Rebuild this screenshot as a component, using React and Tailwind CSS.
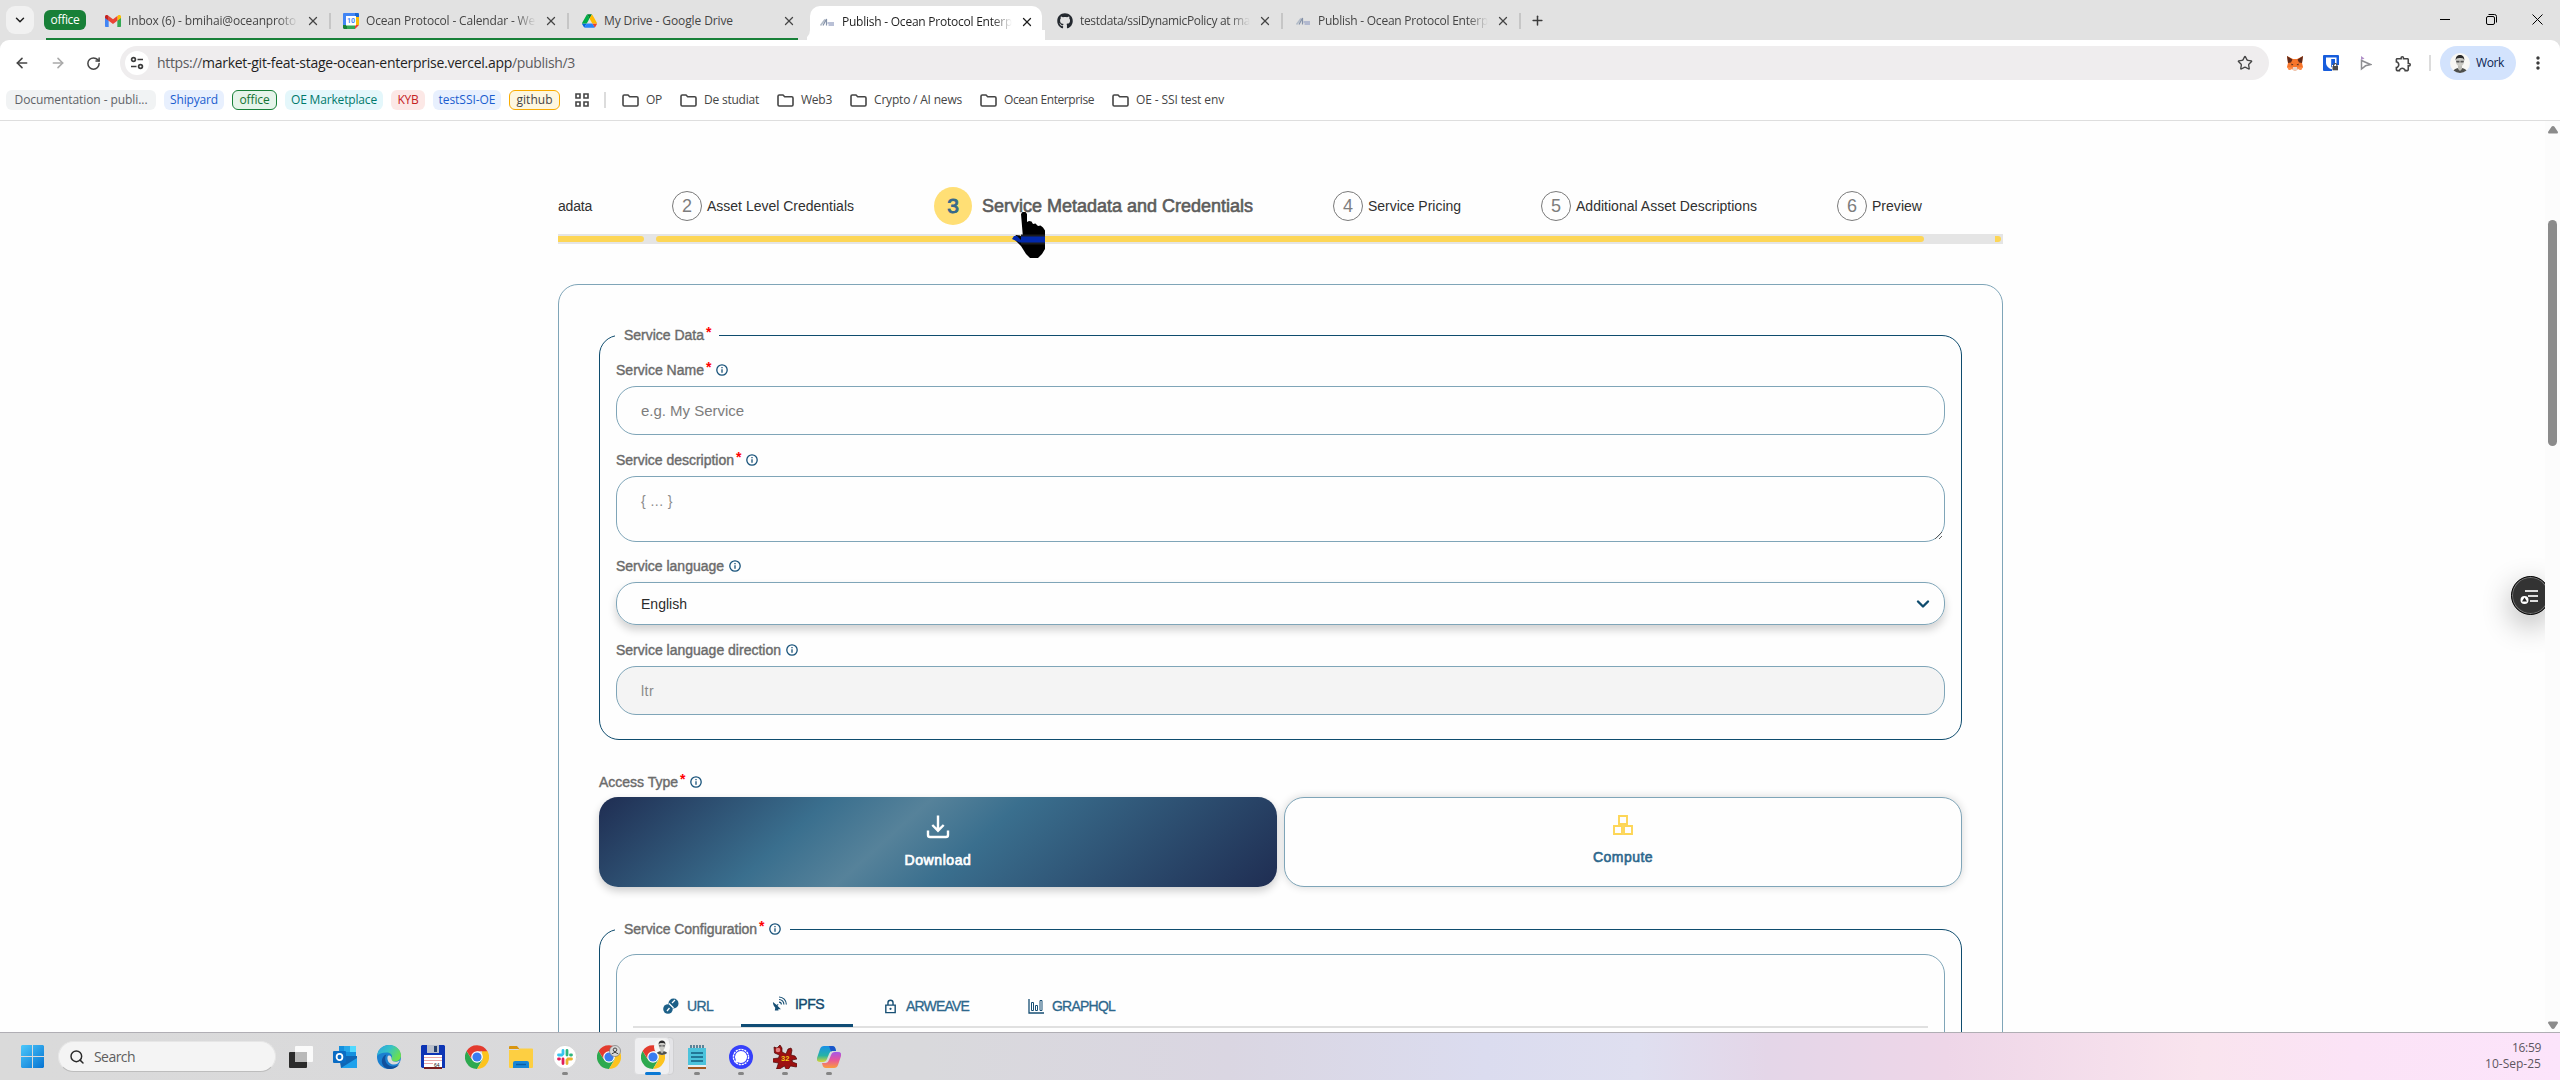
import React, { useLayoutEffect, useRef } from 'react';
import { X, Plus, ArrowLeft, ArrowRight, RotateCw, Star, Search, ChevronDown } from 'lucide-react';
import { FaGithub } from 'react-icons/fa';
import { MdOutlineExtension, MdMoreVert } from 'react-icons/md';

/* A single line of text tracked so that it spans exactly w pixels. */
function Fit({ w, className = '', children }) {
  const ref = useRef(null);
  useLayoutEffect(() => {
    const el = ref.current;
    el.style.letterSpacing = '0px';
    const n = el.textContent.length;
    const natural = el.getBoundingClientRect().width;
    el.style.letterSpacing = `${(w - natural) / n}px`;
  }, [w, children]);
  return (
    <span ref={ref} className={`inline-block shrink-0 whitespace-nowrap ${className}`}>
      {children}
    </span>
  );
}

/* ---------- browser icons ---------- */

const Gmail = () => (
  <svg viewBox="0 0 24 18" className="h-3 w-4">
    <path d="M0 2v14.400c0 .9.700 1.600 1.600 1.600H5.500V8.500z" fill="#4285f4" />
    <path d="M18.500 18h3.900c.9 0 1.600-.7 1.600-1.600V2l-5.500 6.500z" fill="#34a853" />
    <path d="M18.500 1.500v7L24 4.400V2.400c0-2-2.300-3.200-4-2z" fill="#fbbc04" />
    <path d="M5.500 8.500v-7L12 6.400l6.500-4.900v7L12 13.400z" fill="#ea4335" />
    <path d="M0 2.400v2l5.500 4.100v-7L4 .4C2.300-.8 0 .4 0 2.400z" fill="#c5221f" />
  </svg>
);

const Calendar = () => (
  <svg viewBox="0 0 16 16" className="size-4">
    <path d="M1.200 0H12v4H4v8H0V1.200C0 .5.500 0 1.200 0z" fill="#4285f4" />
    <path d="M12 0h2.800c.7 0 1.200.500 1.200 1.200V4h-4z" fill="#1967d2" />
    <path d="M12 4h4v8h-4z" fill="#fbbc04" />
    <path d="M4 12h8v4H4z" fill="#34a853" />
    <path d="M0 12h4v4H1.200C.5 16 0 15.500 0 14.800z" fill="#188038" />
    <path d="M12 12h4l-4 4z" fill="#ea4335" />
    <path d="M3 3h10v9.500H3z" fill="#fff" />
    <text x="8" y="10.300" textAnchor="middle" fontSize="7" fontWeight="700" fontFamily="Roboto, sans-serif" fill="#4285f4">10</text>
  </svg>
);

const Drive = () => (
  <svg viewBox="0 0 87 78" className="h-[14px] w-[15px]">
    <path d="M6.600 66.850l3.850 6.650c.8 1.400 1.950 2.500 3.300 3.300L27.500 53H0c0 1.550.4 3.100 1.200 4.500z" fill="#0066da" />
    <path d="M43.650 25L29.900 1.200c-1.350.8-2.500 1.900-3.300 3.300L1.200 48.500C.4 49.900 0 51.450 0 53h27.500z" fill="#00ac47" />
    <path d="M73.550 76.800c1.350-.8 2.500-1.900 3.300-3.300l9.250-16c.8-1.400 1.200-2.950 1.200-4.500H59.800l5.850 11.500z" fill="#ea4335" />
    <path d="M43.650 25L57.400 1.200C56.050.4 54.500 0 52.900 0H34.400c-1.600 0-3.150.45-4.500 1.200z" fill="#00832d" />
    <path d="M59.800 53H27.500L13.750 76.800c1.350.8 2.900 1.200 4.500 1.200h50.800c1.600 0 3.150-.45 4.500-1.200z" fill="#2684fc" />
    <path d="M73.400 26.500L60.700 4.500c-.8-1.400-1.950-2.500-3.300-3.300L43.650 25 59.800 53h27.450c0-1.550-.4-3.100-1.200-4.500z" fill="#ffba00" />
  </svg>
);

const Ocean = () => (
  <svg viewBox="0 0 16 16" className="size-4">
    <path d="M1.500 11.500L6 5.500" stroke="#b3bcc8" strokeWidth="1.500" />
    <path d="M4 11.500L7.500 5v6.500" fill="none" stroke="#8592a8" strokeWidth="1.200" />
    <path d="M8.500 9H15M9.500 11H15" stroke="#a3acc9" strokeWidth="1.400" />
  </svg>
);

const TuneIcon = () => (
  <svg viewBox="0 0 16 16" className="size-4" fill="none" stroke="#3c3c3c" strokeWidth="1.700">
    <circle cx="4.500" cy="4.500" r="1.900" />
    <path d="M8.500 4.500H14M2 11.500h5.500" />
    <circle cx="11.500" cy="11.500" r="1.900" />
  </svg>
);

const Fox = () => (
  <svg viewBox="0 0 16 15" className="h-[15px] w-4">
    <path d="M0 0l6 3h4l6-3-1 7 1 4-2 3-3-1-2 1.500H7L5 13l-3 1-2-3 1-4z" fill="#f6752b" />
    <path d="M0 0l5.500 3.500L4 6.500 1 7zM16 0l-5.500 3.500L12 6.500l3 .5z" fill="#5e2a1c" />
    <path d="M6 11h4l.5 2-1 1.500h-3L5.500 13z" fill="#e8d2c6" />
    <path d="M4.500 7.500l2 1.500-2 .3zM11.500 7.500l-2 1.500 2 .3z" fill="#33231f" />
    <path d="M0 11l5 .5L5 13l-3 1zM16 11l-5 .5.1 1.500 2.900 1z" fill="#ff8e4a" />
  </svg>
);

const Bitwarden = () => (
  <svg viewBox="0 0 16 16" className="size-4">
    <rect width="16" height="16" rx="1" fill="#175ddc" />
    <path d="M3 2.500h10.500V8c0 3-2.500 5-5.200 6.300C5.500 13 3 11 3 8z" fill="#fff" />
    <path d="M8.200 4H12v4c0 1.800-1.500 3.200-3.800 4.500z" fill="#175ddc" />
    <rect x="9" y="10" width="7" height="6" fill="#fff" />
    <rect x="9.500" y="11" width="5.500" height="4.300" fill="#4b4b4b" />
    <path d="M10.600 11V9.800a1.700 1.700 0 013.300 0V11" fill="none" stroke="#4b4b4b" strokeWidth="1.200" />
  </svg>
);

const Pointer = () => (
  <svg viewBox="0 0 12 16" className="h-4 w-3" fill="none" strokeWidth="1.500">
    <path d="M1.500 14V5.500l9 4-5 1.300z" stroke="#8e8e92" />
    <path d="M1 1v4l3.500-1.500z" fill="#b08fc7" stroke="none" />
  </svg>
);

const Face = ({ className }) => (
  <svg viewBox="0 0 20 20" className={className}>
    <circle cx="10" cy="10" r="10" fill="#f7f7f5" />
    <path d="M3.500 17.500C5 15.500 7.500 15 10 15s5 .5 6.500 2.500A10 10 0 013.500 17.500z" fill="#4d4f4d" />
    <path d="M8 12h4v4l-2 2-2-2z" fill="#bdbdb8" />
    <ellipse cx="10" cy="8.500" rx="4" ry="5" fill="#c9c9c4" />
    <path d="M5.700 7.500C5.500 3.500 7.500 2 10 2s4.500 1.500 4.300 5.500c-.8-2-1-2.600-4.300-2.600s-3.500.6-4.300 2.600z" fill="#2c2c2c" />
    <path d="M6 7.800h3.500v1.700H6.500zM10.500 7.800H14l-.5 1.700h-3z" fill="#555" />
  </svg>
);

/* ---------- browser chrome ---------- */

const tabs = [
  { icon: <Gmail />, title: 'Inbox (6) - bmihai@oceanproto', w: 168 },
  { icon: <Calendar />, title: 'Ocean Protocol - Calendar - We', w: 169 },
  { icon: <Drive />, title: 'My Drive - Google Drive', w: 129 },
  { icon: <Ocean />, title: 'Publish - Ocean Protocol Enterp', w: 170, active: true },
  { icon: <FaGithub className="size-4 text-[#24292f]" />, title: 'testdata/ssiDynamicPolicy at ma', w: 170 },
  { icon: <Ocean />, title: 'Publish - Ocean Protocol Enterp', w: 170 },
];

function Tab({ t, index }) {
  const fade = index !== 2 ? '[mask-image:linear-gradient(90deg,#000_88%,transparent)]' : '';
  const body = (
    <>
      <span className="flex w-4 shrink-0 justify-center">{t.icon}</span>
      <span className={`ml-[7px] w-[170px] overflow-hidden ${fade}`}>
        <Fit w={t.w}>{t.title}</Fit>
      </span>
      <X className="ml-2 size-[14px] shrink-0" strokeWidth={2.200} />
    </>
  );
  if (t.active) {
    return (
      <div className="flex w-[238px] shrink-0 items-end text-[#1f1f1f]">
        <span className="h-2.5 w-[3px] bg-white" />
        <div className="relative flex h-[34px] w-[232px] items-center rounded-t-[10px] bg-white pb-[3px] pl-[9px]">
          <span className="absolute bottom-0 -left-[10px] size-[10px] rounded-br-[10px] bg-[#e2e2e2]" />
          {body}
        </div>
        <span className="h-2.5 w-[3px] bg-white" />
      </div>
    );
  }
  const sep = index !== 2 && index !== 3;
  return (
    <div className="flex w-[238px] shrink-0 items-center pt-[2px] pl-3 text-[#454545]">
      {body}
      {sep && <span className="ml-auto h-4 w-[2px] bg-[#c6c6c6]" />}
    </div>
  );
}

function TabStrip() {
  return (
    <div className="relative flex h-10 bg-[#e2e2e2]">
      <div className="mt-1.5 ml-1.5 flex size-7 items-center justify-center rounded-[9px] bg-[#f1f1f1]">
        <ChevronDown className="size-3.5 text-[#1f1f1f]" strokeWidth={2.500} />
      </div>
      <div className="mt-2.5 ml-2.5 flex h-5 w-[42px] items-center justify-center rounded-md bg-[#188038] text-white">
        <Fit w={29}>office</Fit>
      </div>
      <div className="ml-[7px] flex">
        {tabs.map((t, i) => (
          <Tab key={i} t={t} index={i} />
        ))}
      </div>
      <Plus className="mt-[13px] ml-[9px] size-[15px] text-[#3c3c3c]" strokeWidth={2.400} />
      <div className="mt-[14px] mr-[17px] ml-auto flex gap-[35px] text-black">
        <svg viewBox="0 0 11 11" className="size-[11px]"><path d="M0 5.500h10" stroke="currentColor" /></svg>
        <svg viewBox="0 0 11 11" className="size-[11px]" fill="none" stroke="currentColor">
          <rect x=".5" y="2.500" width="8" height="8" rx="1.500" />
          <path d="M2.500.5h6a2 2 0 012 2v6" />
        </svg>
        <svg viewBox="0 0 11 11" className="size-[11px]"><path d="M.5.5l10 10M10.500.5l-10 10" stroke="currentColor" /></svg>
      </div>
      <span className="absolute bottom-0 left-[46px] h-[2px] w-[752px] bg-[#188038]" />
    </div>
  );
}

function Toolbar() {
  return (
    <div className="bg-[#e2e2e2]">
      <div className="flex h-[46px] items-center rounded-t-[9px] bg-white pl-[14px]">
        <ArrowLeft className="size-4 text-[#454545]" strokeWidth={2.400} />
        <ArrowRight className="ml-5 size-4 text-[#a9a9a9]" strokeWidth={2.400} />
        <RotateCw className="ml-5 size-[15px] text-[#454545]" strokeWidth={2.400} />
        <div className="ml-[19px] flex h-[34px] w-[2149px] items-center rounded-full bg-[#efedee] pl-[5px]">
          <span className="flex size-6 items-center justify-center rounded-full bg-white"><TuneIcon /></span>
          <span className="ml-2 text-sm text-[#5b5b5e]">
            <Fit w={45}>https://</Fit>
            <Fit w={310} className="text-[#1f1f1f]">market-git-feat-stage-ocean-enterprise.vercel.app</Fit>
            <Fit w={63}>/publish/3</Fit>
          </span>
          <Star className="mr-4 ml-auto size-4 text-[#454545]" />
        </div>
        <span className="ml-[18px]"><Fox /></span>
        <span className="ml-5"><Bitwarden /></span>
        <span className="ml-[21px]"><Pointer /></span>
        <MdOutlineExtension className="ml-[22px] size-[19px] text-[#454545]" />
        <span className="ml-[16px] h-4 w-[2px] bg-[#dcdcdc]" />
        <div className="ml-[9px] flex h-[34px] w-[76px] items-center rounded-full bg-[#d3e3fd] pl-2.5 text-[#0b2350]">
          <Face className="size-5" />
          <span className="ml-[6px]"><Fit w={28}>Work</Fit></span>
        </div>
        <MdMoreVert className="ml-[12px] size-5 text-[#3c3c3c]" />
      </div>
    </div>
  );
}

const Folder = ({ name, w }) => (
  <span className="flex items-center gap-[7px]">
    <svg viewBox="0 0 17 13" className="h-[13px] w-[17px]" fill="none" stroke="#454545" strokeWidth="1.600">
      <path d="M1 2.200Q1 1 2.200 1H6l1.700 1.700h7Q16 2.700 16 4v6.800Q16 12 14.800 12H2.200Q1 12 1 10.800z" />
    </svg>
    <Fit w={w}>{name}</Fit>
  </span>
);

function Bookmarks() {
  const chip = 'flex h-5 items-center justify-center rounded-md';
  return (
    <div className="flex h-[35px] items-start gap-2 border-b border-[#dedede] bg-white pt-1 pl-1.5 text-[#454545]">
      <span className={`${chip} w-[150px] bg-[#f1f3f4] text-[#5f6368]`}><Fit w={133}>Documentation - publi...</Fit></span>
      <span className={`${chip} w-[60px] bg-[#e8f0fe] text-[#1a5dcf]`}><Fit w={48}>Shipyard</Fit></span>
      <span className={`${chip} w-[45px] border border-[#188038] bg-[#e6f4ea] text-[#137333]`}><Fit w={30}>office</Fit></span>
      <span className={`${chip} w-[98px] bg-[#e4f7fb] text-[#00796b]`}><Fit w={86}>OE Marketplace</Fit></span>
      <span className={`${chip} w-[34px] bg-[#fce8e6] text-[#c5221f]`}><Fit w={21}>KYB</Fit></span>
      <span className={`${chip} w-[68px] bg-[#e8f0fe] text-[#1a5dcf]`}><Fit w={57}>testSSI-OE</Fit></span>
      <span className={`${chip} w-[51px] border border-[#f9ab00] bg-[#fef7e0] text-[#454545]`}><Fit w={36}>github</Fit></span>
      <svg viewBox="0 0 14 14" className="mt-[3px] ml-[7px] size-[14px]" fill="none" stroke="#454545" strokeWidth="1.600">
        <path d="M1 1h4v4H1zM9 1h4v4H9zM1 9h4v4H1zM9 9h4v4H9z" />
      </svg>
      <span className="mt-0.5 ml-[7px] h-4 w-[2px] bg-[#dcdcdc]" />
      <div className="ml-2 flex h-5 items-center gap-[18px]">
        <Folder name="OP" w={16} />
        <Folder name="De studiat" w={55} />
        <Folder name="Web3" w={31} />
        <Folder name="Crypto / AI news" w={88} />
        <Folder name="Ocean Enterprise" w={90} />
        <Folder name="OE - SSI test env" w={88} />
      </div>
    </div>
  );
}

/* ---------- page ---------- */

const Step = ({ n, w, children, className }) => (
  <div className={`flex shrink-0 items-center gap-[5px] ${className}`}>
    <span className="flex size-[30px] items-center justify-center rounded-full border border-[#7a7a7a] text-lg text-[#7d7d7d]">{n}</span>
    <Fit w={w} className="text-sm text-[#303030]">{children}</Fit>
  </div>
);

const HandCursor = () => (
  <svg viewBox="0 0 34 48" className="absolute top-[90px] left-[1011px] h-12 w-[34px]">
    <path d="M10 3l1.500-2h3L16 3v8l2-1 2.500.5L22 13l2.500-.5L27 15l2.500-.5 2.500 2 2 3V38l-3 5-4 4h-8l-4-4-5-8-5-5-2-3 2-3 4 .5 3 2.500z" fill="#000" />
    <path d="M10 23.500h24v10H10z" fill="#1c1c1c" />
    <path d="M10 25.500h24v6H8.500L1 28l2-3h3l4 4z" fill="#0229ab" />
  </svg>
);

function Steps() {
  return (
    <>
      <div className="mt-[65px] flex h-10 items-center overflow-hidden">
        <Fit w={34} className="text-sm text-[#303030]">adata</Fit>
        <Step n="2" w={147} className="ml-20">Asset Level Credentials</Step>
        <div className="ml-20 flex shrink-0 items-center gap-[10px]">
          <span className="flex size-[38px] items-center justify-center rounded-full bg-[#ffdf75] text-[21px] text-[#35698a] [-webkit-text-stroke:0.900px_#35698a]">3</span>
          <Fit w={271} className="text-[18px] text-[#5c5c5c] [-webkit-text-stroke:0.600px_#5c5c5c]">Service Metadata and Credentials</Fit>
        </div>
        <Step n="4" w={93} className="ml-20">Service Pricing</Step>
        <Step n="5" w={181} className="ml-20">Additional Asset Descriptions</Step>
        <Step n="6" w={50} className="ml-20">Preview</Step>
        <Step n="7" w={80} className="ml-[81px]">Submission</Step>
      </div>
      <div className="mt-2 flex h-2.5 items-center overflow-hidden bg-[#e5e5e5]">
        <span className="h-[6px] w-[86px] shrink-0 rounded-r-[3px] bg-[#fdd656]" />
        <span className="ml-3 h-[6px] w-[1268px] shrink-0 rounded-[3px] bg-[#fdd656]" />
        <span className="ml-[71px] h-[6px] w-[6px] shrink-0 rounded-r-full bg-[#fdd656]" />
      </div>
    </>
  );
}

const Info = () => (
  <svg viewBox="0 0 12 12" className="size-3" fill="none" stroke="#17527a">
    <circle cx="6" cy="6" r="5.200" strokeWidth="1.300" />
    <path d="M6 5.300v3.500M6 3.100v1.200" strokeWidth="1.300" />
  </svg>
);

const Label = ({ w, required, info, children }) => (
  <span className="flex h-5 items-center text-sm text-[#6b6b6b]">
    <Fit w={w} className="[-webkit-text-stroke:0.400px_#6b6b6b]">{children}</Fit>
    {required && <span className="-mt-1.5 ml-[2px] w-[5px] font-bold text-[#f00]">*</span>}
    {info && <span className="ml-[5px]"><Info /></span>}
  </span>
);

const UrlIcon = () => (
  <svg viewBox="0 0 16 16" className="size-4">
    <circle cx="10.500" cy="5.500" r="5" fill="#1d6088" />
    <circle cx="5" cy="11" r="4.800" fill="#1d6088" />
    <path d="M6 5.500l4.500 4.500M12 2l-3 3M4 13l2.500-3" stroke="#fff" strokeWidth="1.300" />
  </svg>
);

const DishIcon = () => (
  <svg viewBox="0 0 16 16" className="size-[15px]" fill="none" stroke="#174f74" strokeWidth="1.200">
    <path d="M1 6.500C1 9 2 11 3.500 12.500L3 15.500h4l-.5-1.500c1 .3 2 .3 3 0L5.800 10.500 7 9.300l-.8-.8L5 9.700z" fill="#174f74" stroke="none" />
    <path d="M7.500 6.500a2.500 2.500 0 012.500 2.500M7.500 3.700A5.300 5.300 0 0112.700 9M7.500 1A8 8 0 0115.300 9" />
  </svg>
);

const LockIcon = () => (
  <svg viewBox="0 0 13 16" className="h-[15px] w-[13px]" fill="none" stroke="#174f74" strokeWidth="1.500">
    <path d="M1.500 6.500h10v8h-10zM3.800 6.500V4a2.700 2.700 0 015.400 0v2.500" />
    <circle cx="6.500" cy="10.500" r="1.200" fill="#174f74" stroke="none" />
  </svg>
);

const GraphIcon = () => (
  <svg viewBox="0 0 16 15" className="h-[15px] w-4" fill="none" stroke="#174f74">
    <path d="M1 0v14h15" strokeWidth="1.300" />
    <path d="M3.500 3.500h2v8h-2zM7.500 6.500h2v5h-2zM12 1.500h2v10h-2z" />
  </svg>
);

function ServiceTabs() {
  const text = 'text-sm text-[#2d678c] [-webkit-text-stroke:0.300px_#2d678c]';
  return (
    <div className="mx-4 flex h-[73px] items-end border-b-2 border-[#e0e0e0]">
      <div className="ml-[30px] flex h-[40px] w-[78px] items-center gap-2"><UrlIcon /><Fit w={26} className={text}>URL</Fit></div>
      <div className="-mb-[1px] flex h-[44px] w-28 items-center gap-2 border-b-[3px] border-[#0f4c75] pl-[31px]">
        <DishIcon /><Fit w={29} className="text-sm text-[#124a6e] [-webkit-text-stroke:0.400px_#124a6e]">IPFS</Fit>
      </div>
      <div className="ml-[31px] flex h-[40px] w-[144px] items-center gap-[9px]"><LockIcon /><Fit w={63} className={text}>ARWEAVE</Fit></div>
      <div className="flex h-[40px] items-center gap-2"><GraphIcon /><Fit w={63} className={text}>GRAPHQL</Fit></div>
    </div>
  );
}

function Page() {
  const box = 'rounded-[20px] border border-[#7fa5b8]';
  return (
    <div className="relative flex h-[911px] overflow-hidden bg-[#fefefe] font-['Liberation_Sans',Arial,sans-serif]">
      <div className="ml-[558px] w-[1445px]">
        <Steps />
        <div className="mt-10 h-[800px] rounded-t-[20px] border border-[#7fa5b8] px-10 pt-[50px]">
          <section className="h-[405px] rounded-[20px] border border-[#0f4c6e] px-4">
            <div className="-mt-[11px] -ml-px flex w-[104px] bg-[#fefefe] pl-[9px]">
              <Label w={80} required>Service Data</Label>
            </div>
            <div className="mt-[15px]"><Label w={88} required info>Service Name</Label></div>
            <div className={`${box} mt-[6px] flex h-[49px] items-center pl-6 text-[15px] text-[#7d7d7d]`}><Fit w={103}>e.g. My Service</Fit></div>
            <div className="mt-[15px]"><Label w={118} required info>Service description</Label></div>
            <div className={`${box} relative mt-[6px] flex h-[66px] pt-[14px] pl-6 text-sm text-[#8c8c8c]`}>
              <Fit w={32}>{'{ ... }'}</Fit>
              <svg viewBox="0 0 9 9" className="absolute right-[1px] bottom-[1px] size-[9px]" stroke="#505050" strokeWidth=".9"><path d="M1 8l7-7M5 8l3-3" /></svg>
            </div>
            <div className="mt-[14px]"><Label w={108} info>Service language</Label></div>
            <div className={`${box} mt-[6px] flex h-[43px] items-center pr-[13px] pl-6 text-sm text-[#2b2b2b] shadow-[0_5px_8px_rgba(0,0,0,0.18)]`}>
              <Fit w={46}>English</Fit>
              <svg viewBox="0 0 16 16" className="ml-auto size-4" fill="none" stroke="#0f4c6e" strokeWidth="2.400" strokeLinecap="round" strokeLinejoin="round"><path d="M3 5.500l5 5 5-5" /></svg>
            </div>
            <div className="mt-[15px]"><Label w={165} info>Service language direction</Label></div>
            <div className={`${box} mt-[6px] flex h-[49px] items-center bg-[#f4f4f4] pl-6 text-sm text-[#8a8a8a]`}><Fit w={13}>ltr</Fit></div>
          </section>

          <div className="mt-8"><Label w={79} required info>Access Type</Label></div>
          <div className="mt-[5px] flex gap-[7px]">
            <div className="flex h-[90px] w-[678px] flex-col items-center rounded-[19px] bg-[linear-gradient(138deg,#1f2d52_0%,#3a6f8e_30%,#56829a_43%,#3a6f8e_55%,#1f2d52_100%)] pt-[18px] text-white shadow-[0_4px_8px_rgba(0,0,0,0.2)]">
              <svg viewBox="0 0 24 24" className="size-6" fill="none" stroke="currentColor" strokeWidth="2.400">
                <path d="M12 .5V15M6.300 10l5.700 5.700L17.700 10M2 15.500V20q0 2 2 2h16q2 0 2-2v-4.500" />
              </svg>
              <Fit w={67} className="mt-[11px] text-sm [-webkit-text-stroke:0.700px_#fff]">Download</Fit>
            </div>
            <div className={`${box} flex h-[90px] w-[678px] flex-col items-center bg-[#fefefe] pt-[17px] shadow-[0_0_8px_rgba(0,0,0,0.16)]`}>
              <svg viewBox="0 0 20 20" className="size-5" fill="none" stroke="#fdd656" strokeWidth="1.900">
                <path d="M6 1h8v8H6zM1 11h8v8H1zM11 11h8v8h-8z" />
              </svg>
              <Fit w={60} className="mt-[12px] text-sm text-[#2d678c] [-webkit-text-stroke:0.600px_#2d678c]">Compute</Fit>
            </div>
          </div>

          <section className="mt-[42px] h-[200px] rounded-t-[20px] border border-[#0f4c6e] px-4">
            <div className="-mt-[11px] -ml-px flex w-[175px] bg-[#fefefe] pl-[9px]">
              <Label w={133} required info>Service Configuration</Label>
            </div>
            <div className="mt-[15px] h-[180px] rounded-t-[20px] border border-[#7fa5b8]">
              <ServiceTabs />
            </div>
          </section>
        </div>
      </div>
      <div className="absolute top-[455px] right-[10px] flex size-[39px] items-center justify-center rounded-full border border-black bg-[#333] pr-1 shadow-[0_10px_30px_rgba(0,0,0,0.3)] ring-1 ring-[#777] ring-inset">
        <svg viewBox="0 0 20 16" className="h-4 w-5" stroke="#ddd" strokeWidth="1.800">
          <path d="M6 3h13M9 8h10M11 13h8" />
          <circle cx="5.500" cy="12" r="4" fill="#fff" stroke="none" />
          <path d="M5.500 9.500l2.500 4H3z" fill="#222" stroke="none" />
        </svg>
      </div>
      <div className="relative ml-auto flex w-[15px] flex-col items-center bg-[#fcfcfc]">
        <svg viewBox="0 0 10 8" className="mt-[5px] h-2 w-[10px]"><path d="M5 0q1 0 1.500.8L10 6q0 1.500-1 1.500H1Q0 7.500 0 6L3.500.8Q4 0 5 0z" fill="#8b8b8b" /></svg>
        <span className="mt-[86px] h-[226px] w-[9px] rounded-full bg-[#8b8b8b]" />
        <svg viewBox="0 0 10 8" className="mt-auto mb-[3px] h-2 w-[10px] rotate-180"><path d="M5 0q1 0 1.500.8L10 6q0 1.500-1 1.500H1Q0 7.500 0 6L3.500.8Q4 0 5 0z" fill="#8b8b8b" /></svg>
      </div>
      <HandCursor />
    </div>
  );
}

/* ---------- taskbar ---------- */

const Chrome = ({ badge }) => (
  <svg viewBox="0 0 24 24" className="size-6">
    <path d="M1.600 6A12 12 0 0012 24l6-10.500L12 12 6.500 14z" fill="#2da94f" />
    <path d="M22.400 6A12 12 0 0112 24l5.500-9L17 6z" fill="#fcc31e" />
    <path d="M1.600 6A12 12 0 0122.400 6.300H12L7 14.500z" fill="#e33b2e" />
    <circle cx="12" cy="12" r="5.800" fill="#fff" />
    <circle cx="12" cy="12" r="4.600" fill="#3a7cf0" />
    {badge && (
      <g>
        <circle cx="18" cy="6" r="5.500" fill="#d8d8d8" stroke="#666" strokeWidth=".6" />
        <circle cx="18" cy="4.800" r="1.800" fill="none" stroke="#444" />
        <path d="M14.800 8.800q3.200-3 6.400 0" fill="none" stroke="#444" />
      </g>
    )}
  </svg>
);

const TaskView = () => (
  <svg viewBox="0 0 24 22" className="h-[22px] w-6">
    <rect y="6" width="18" height="16" rx="1" fill="#2b2b2b" />
    <rect x="6" width="18" height="16" rx="1" fill="#fafafa" />
    <rect x="6" y="6" width="12" height="10" fill="#b9b9b9" />
  </svg>
);

const Outlook = () => (
  <svg viewBox="0 0 24 22" className="h-[22px] w-6">
    <rect x="6" width="17" height="14" fill="#1490df" />
    <path d="M11 0h6v6h-6z" fill="#28a8ea" /><path d="M17 0h6v6h-6z" fill="#50d9ff" />
    <path d="M6 10h18v12H8z" fill="#1066b5" /><path d="M8 22l16-10v10z" fill="#1fa1ec" />
    <rect y="5" width="13" height="12" rx="1" fill="#0a6cc4" />
    <ellipse cx="6.500" cy="11" rx="2.900" ry="3.200" fill="none" stroke="#fff" strokeWidth="1.800" />
  </svg>
);

const Edge = () => (
  <svg viewBox="0 0 24 24" className="size-6">
    <defs>
      <linearGradient id="edgeTop" x1="0" y1="0" x2="1" y2="0.500"><stop offset="0" stopColor="#2aa5e0" /><stop offset=".5" stopColor="#35c1c8" /><stop offset="1" stopColor="#6be04d" /></linearGradient>
    </defs>
    <circle cx="12" cy="12" r="12" fill="#1a80d0" />
    <path d="M0 11C1 4 6 0 12 0c7 0 12 5 12 10.500 0 3.500-2.500 6-6 6-2.500 0-4-1-4-2 0-.8 1-1 1-3S13 7.500 9.500 7.500C5 7.500 1.500 9 0 11z" fill="url(#edgeTop)" />
    <path d="M9.500 9.500C7 12 7.500 21 16 21.500c2.500 0 5-1 6.500-2.500C20 23 16 24 12.500 24 7 23.500 4 19 5 14.500c.6-2.700 2.400-4.500 4.500-5z" fill="#11509c" />
    <path d="M14.500 14c0 2.500 4 4 8.500 1.500-1 2.500-3.500 4.500-7 4-4-.5-6-4-5.500-7.500.8-2.500 4.500-1.500 4 2z" fill="#dadadc" />
  </svg>
);

const Floppy = () => (
  <svg viewBox="0 0 24 24" className="size-6">
    <path d="M1 0h22l1 1v22H1.500L0 22V1z" fill="#0d35b5" />
    <path d="M6 0h12v8H6z" fill="#b9bfcb" /><path d="M13 1h3v6h-3z" fill="#25406f" />
    <path d="M3 10h18v12H3z" fill="#fff" /><path d="M3 12.500h18M3 15.500h18M3 18.500h9" stroke="#e8a6a6" strokeWidth="1.200" />
    <path d="M3 22h18v2H3z" fill="#7a1f1f" />
    <text x="13" y="21.500" fontSize="5" fill="#111" fontFamily="Liberation Sans, sans-serif">64</text>
  </svg>
);

const Explorer = () => (
  <svg viewBox="0 0 24 22" className="h-[22px] w-6">
    <path d="M0 1q0-1 1-1h7l2.500 3H0z" fill="#d9950f" />
    <path d="M0 4h9l2-1.500h12q1 0 1 1V21q0 1-1 1H1q-1 0-1-1z" fill="#fdcf42" />
    <path d="M4 22v-5q0-2 2-2h12q2 0 2 2v5z" fill="#1786d6" /><path d="M7 18.500h10" stroke="#0b5ea5" strokeWidth="1.500" />
  </svg>
);

const Slack = () => (
  <svg viewBox="0 0 24 24" className="size-6" strokeWidth="2.800" strokeLinecap="round">
    <circle cx="12" cy="12" r="11.600" fill="#fff" stroke="#c9c9c9" strokeWidth=".6" />
    <path d="M10 5.500V9M5.500 10H9" stroke="#36c5f0" /><path d="M14 5.500V10M18.500 10h-1" stroke="#2eb67d" />
    <path d="M14 18.500V15M18.500 14H15" stroke="#ecb22e" /><path d="M10 18.500V14M5.500 14h1" stroke="#e01e5a" />
  </svg>
);

const Notepad = () => (
  <svg viewBox="0 0 20 24" className="h-6 w-5">
    <path d="M1 3h18v17H1z" fill="#4cc3dc" /><path d="M1 20h18v2H1z" fill="#e9eef0" /><path d="M1 22h18v2H1z" fill="#a3591f" />
    <path d="M4 8h12M4 12h12M4 16h12" stroke="#155f80" strokeWidth="1.300" />
    <path d="M4 0v3M7 0v3M10 0v3M13 0v3M16 0v3" stroke="#1b5674" strokeWidth="1.300" />
  </svg>
);

const Signal = () => (
  <svg viewBox="0 0 24 24" className="size-6">
    <circle cx="12" cy="12" r="12" fill="#3640fb" />
    <circle cx="12" cy="12" r="7.600" fill="none" stroke="#fff" strokeWidth="1.400" strokeDasharray="2.200 .8" />
    <path d="M12 6a6 6 0 11-3 11.200l-3 .8.800-3A6 6 0 0112 6z" fill="#fff" />
  </svg>
);

const RedSplat = () => (
  <svg viewBox="0 0 24 24" className="size-6">
    <path d="M1 2l3 1 3-3 2 3v4l4 2 2-5 3-1 1 2-1 5 4 1 2 3-5 1 .5 2 5 2-1 3-6-1-2 3-2 1-2-4-5 3-3 0 2-6-6-1-1-3 7-1 1-3-5-2z" fill="#9c1010" stroke="#4c0606" strokeWidth=".7" />
    <circle cx="5" cy="5" r="2.300" fill="#e57f7f" />
    <text x="8" y="16" fontSize="7.500" fontWeight="700" fill="#f5c518" fontFamily="Liberation Sans, sans-serif">32</text>
  </svg>
);

const Copilot = () => (
  <svg viewBox="0 0 24 22" className="h-[22px] w-6">
    <defs>
      <linearGradient id="copA" x1="0" y1="0" x2="0" y2="1"><stop offset="0" stopColor="#1790e8" /><stop offset=".6" stopColor="#27b3a5" /><stop offset="1" stopColor="#d9d633" /></linearGradient>
      <linearGradient id="copB" x1="0" y1="0" x2="0" y2="1"><stop offset="0" stopColor="#a557e8" /><stop offset=".5" stopColor="#e8559b" /><stop offset="1" stopColor="#fb9c3c" /></linearGradient>
    </defs>
    <path d="M7 0h8q3 0 3.500 3l.5 2h-4q-2 0-3 3l-2 5q-1 3-4 3H3q-4 0-3-4L3 3q1-3 4-3z" fill="url(#copA)" />
    <path d="M17 22H9q-3 0-3.500-3L5 17h4q2 0 3-3l2-5q1-3 4-3h3q4 0 3 4l-3 9q-1 3-4 3z" fill="url(#copB)" />
    <path d="M12 0h3q3 0 3.500 3l.5 2h-4l-1 .5z" fill="#1b55c9" />
  </svg>
);

const TaskItem = ({ children, running }) => (
  <div className="relative flex h-[47px] w-11 items-center justify-center">
    {children}
    {running && <span className="absolute bottom-[5px] h-[3px] w-1.5 rounded-full bg-[#858585]" />}
  </div>
);

function Taskbar() {
  return (
    <div className="flex h-12 border-t border-[#b0aeb4] bg-[linear-gradient(90deg,#dadada_0%,#d9d9dc_36%,#dad6e2_48%,#dbdcef_58%,#dfdff0_64%,#e4d6e8_69%,#eed6e8_76%,#f9e4ee_86%,#fbe3f6_92%,#fce4fb_100%)]">
      <svg viewBox="0 0 23 23" className="mt-3 ml-[21px] size-[23px]">
        <defs><linearGradient id="win" x1="0" y1="0" x2="1" y2="1"><stop offset="0" stopColor="#4cc8fb" /><stop offset="1" stopColor="#0673d2" /></linearGradient></defs>
        <path d="M1 0h10v11H0V1zM12 0h10l1 1v10H12zM0 12h11v11H1l-1-1zM12 12h11v10l-1 1H12z" fill="url(#win)" />
      </svg>
      <div className="mt-2 ml-[14px] flex h-[31px] w-[218px] items-center rounded-full border border-[#e6e6e6] border-b-[#bdbdbd] bg-[#f4f4f4] pl-2.5 text-sm text-[#5e5e5e]">
        <Search className="size-4 text-[#2a2a2a]" strokeWidth={2.200} />
        <span className="ml-[9px]"><Fit w={41}>Search</Fit></span>
      </div>
      <div className="ml-[3px] flex">
        <TaskItem><TaskView /></TaskItem>
        <TaskItem><Outlook /></TaskItem>
        <TaskItem><Edge /></TaskItem>
        <TaskItem><Floppy /></TaskItem>
        <TaskItem><Chrome /></TaskItem>
        <TaskItem><Explorer /></TaskItem>
        <TaskItem running><Slack /></TaskItem>
        <TaskItem><Chrome badge /></TaskItem>
        <div className="relative flex h-[47px] w-11 items-center justify-center">
          <span className="absolute top-1 left-[5px] h-[38px] w-[38px] rounded-[4px] border border-[#d0d0d2] bg-[#e4e4e7]" />
          <span className="absolute top-1 left-[3px] h-[38px] w-[36px] rounded-[4px] border border-[#dcdcde] bg-[#efeff1]" />
          <span className="relative"><Chrome /></span>
          <Face className="absolute top-[6px] left-[23px] size-4" />
          <span className="absolute bottom-[5px] h-[3px] w-4 rounded-full bg-[#0a78d4]" />
        </div>
        <TaskItem running><Notepad /></TaskItem>
        <TaskItem running><Signal /></TaskItem>
        <TaskItem running><RedSplat /></TaskItem>
        <TaskItem running><Copilot /></TaskItem>
      </div>
      <div className="mt-[7px] mr-[19px] ml-auto flex flex-col items-end text-[12px] leading-4 text-[#5c5660]">
        <Fit w={29}>16:59</Fit>
        <Fit w={56}>10-Sep-25</Fit>
      </div>
    </div>
  );
}

export default function App() {
  return (
    <div className="h-[1080px] w-[2560px] overflow-hidden bg-white font-['Open_Sans','Noto_Sans',sans-serif] text-xs">
      <TabStrip />
      <Toolbar />
      <Bookmarks />
      <Page />
      <Taskbar />
    </div>
  );
}
